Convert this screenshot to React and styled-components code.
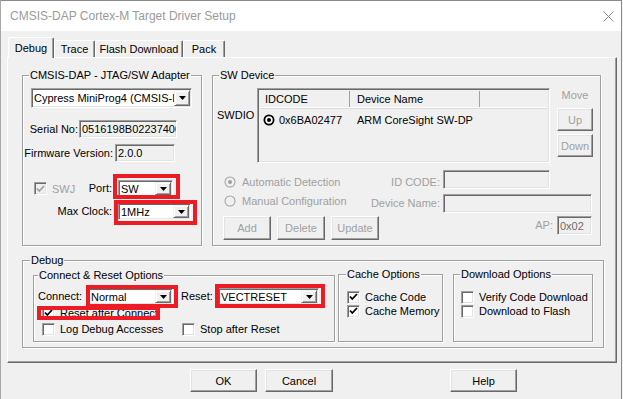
import styled, { createGlobalStyle } from "styled-components";

const GlobalStyle = createGlobalStyle`
  html, body {
    margin: 0;
    padding: 0;
    background: #f0f0f0;
  }
  body {
    font-family: "Liberation Sans", Arial, sans-serif;
    font-size: 11px;
    color: #000;
  }
`;

const Window = styled.div`
  box-sizing: border-box;
  width: 622px;
  height: 399px;
  border-top: 1px solid #8a8a8a;
  border-right: 1px solid #8a8a8a;
  border-left: 1px solid #a8a8a8;
  background: #f0f0f0;
  display: flex;
  flex-direction: column;
  overflow: hidden;
`;

const TitleBar = styled.div`
  height: 30px;
  flex: none;
  background: #fff;
  display: flex;
  align-items: center;
  justify-content: space-between;
  padding: 0 7px 0 9px;
`;

const Title = styled.span`
  font-size: 12px;
  color: #9a9a9a;
`;

const Client = styled.div`
  display: flex;
  flex-direction: column;
  padding: 6px 6px 0;
`;

const TabStrip = styled.div`
  display: flex;
  align-items: flex-end;
  height: 20px;
  padding-left: 1px;
`;

const Tab = styled.div`
  box-sizing: border-box;
  width: ${(p) => p.$w}px;
  height: ${(p) => (p.$active ? 21 : 17)}px;
  margin-bottom: ${(p) => (p.$active ? -1 : 0)}px;
  position: relative;
  z-index: ${(p) => (p.$active ? 1 : 0)};
  display: flex;
  align-items: center;
  justify-content: center;
  background: #f0f0f0;
  border: 1px solid;
  border-bottom: none;
  border-color: #fff #696969 transparent #fff;
  box-shadow: inset -1px 0 0 #a0a0a0;
  border-radius: 2px 2px 0 0;
`;

const TabPanel = styled.div`
  box-sizing: border-box;
  width: 610px;
  height: 306px;
  border: 1px solid;
  border-color: #fff #696969 #696969 #fff;
  box-shadow: inset -1px -1px 0 #a0a0a0;
  padding: 11px 0 0 14px;
  display: flex;
  flex-direction: column;
`;

const TopRow = styled.div`
  display: flex;
  gap: 10px;
`;

const Group = styled.fieldset`
  box-sizing: border-box;
  margin: ${(p) => p.$mt || 0}px 0 0 ${(p) => p.$ml || 0}px;
  padding: 0;
  min-width: 0;
  width: ${(p) => p.$w}px;
  height: ${(p) => p.$h}px;
  flex: none;
  border: 1px solid #a0a0a0;
  box-shadow: 1px 1px 0 #fff, inset 1px 1px 0 #fff;
`;

const Legend = styled.legend`
  margin-left: ${(p) => p.$lx ?? 6}px;
  padding: 0 1px;
  line-height: 13px;
  background: #f0f0f0;
`;

const GroupBody = styled.div`
  display: flex;
  flex-direction: column;
`;

const Row = styled.div`
  display: flex;
  align-items: center;
  height: ${(p) => p.$h}px;
  margin-top: ${(p) => p.$mt || 0}px;
  padding-left: ${(p) => p.$pl || 0}px;
  padding-right: ${(p) => p.$pr || 0}px;
  gap: ${(p) => p.$gap || 0}px;
`;

const Label = styled.span`
  flex: none;
  width: ${(p) => (p.$w ? `${p.$w}px` : "auto")};
  text-align: ${(p) => p.$align || "left"};
  margin-left: ${(p) => p.$ml || 0}px;
  color: ${(p) => (p.$disabled ? "#a0a0a0" : "#000")};
  align-self: ${(p) => p.$self || "auto"};
  white-space: nowrap;
  line-height: 13px;
`;

const LeftCell = styled.div`
  width: ${(p) => p.$w}px;
  flex: none;
  display: flex;
  align-items: center;
  justify-content: space-between;
`;

const Sunken = styled.div`
  box-sizing: border-box;
  position: relative;
  flex: none;
  width: ${(p) => p.$w}px;
  height: ${(p) => p.$h}px;
  border: 1px solid;
  border-color: #a0a0a0 #fff #fff #a0a0a0;
  box-shadow: inset 1px 1px 0 #696969, inset -1px -1px 0 #e3e3e3;
  align-self: ${(p) => p.$self || "auto"};
`;

const Edit = styled(Sunken)`
  background: #f0f0f0;
  display: flex;
  align-items: center;
  padding-left: 2px;
  overflow: hidden;
  white-space: nowrap;
  color: ${(p) => p.$color || "#000"};
`;

const ComboBox = styled(Sunken)`
  background: #fff;
  display: flex;
  padding: 1px;
`;

const ComboText = styled.span`
  flex: 1;
  display: flex;
  align-items: center;
  padding-left: 1px;
  overflow: hidden;
  white-space: nowrap;
`;

const ComboButton = styled.span`
  box-sizing: border-box;
  width: 16px;
  flex: none;
  display: flex;
  align-items: center;
  justify-content: center;
  background: #f0f0f0;
  border: 1px solid;
  border-color: #f0f0f0 #696969 #696969 #f0f0f0;
  box-shadow: inset 1px 1px 0 #fff, inset -1px -1px 0 #a0a0a0;
`;

const Mark = styled.span`
  position: absolute;
  pointer-events: none;
  border: 4px solid #ed1c24;
  top: ${(p) => p.$t}px;
  right: ${(p) => p.$r}px;
  bottom: ${(p) => p.$b}px;
  left: ${(p) => p.$l}px;
`;

const Button = styled.button`
  box-sizing: border-box;
  flex: none;
  width: ${(p) => p.$w}px;
  height: ${(p) => p.$h}px;
  margin-left: ${(p) => p.$ml || 0}px;
  margin-top: ${(p) => p.$mt || 0}px;
  padding: 0;
  font: inherit;
  color: ${(p) => (p.disabled ? "#a0a0a0" : "#000")};
  background: #f0f0f0;
  border: 1px solid;
  border-color: #fff #696969 #696969 #fff;
  box-shadow: inset -1px -1px 0 #a0a0a0, inset 1px 1px 0 #e3e3e3;
`;

const Check = styled.label`
  position: relative;
  display: flex;
  align-items: center;
  gap: 5px;
  height: 14px;
  width: ${(p) => (p.$w ? `${p.$w}px` : "auto")};
  flex: none;
  color: ${(p) => (p.$disabled ? "#a0a0a0" : "#000")};
  white-space: nowrap;
`;

const CheckBox = styled.span`
  box-sizing: border-box;
  width: 13px;
  height: 13px;
  flex: none;
  display: flex;
  align-items: center;
  justify-content: center;
  background: ${(p) => (p.$disabled ? "#f0f0f0" : "#fff")};
  border: 1px solid;
  border-color: #a0a0a0 #fff #fff #a0a0a0;
  box-shadow: inset 1px 1px 0 #696969, inset -1px -1px 0 #e3e3e3;
`;

const Radio = styled.span`
  display: flex;
  align-items: center;
  gap: 6px;
  width: ${(p) => p.$w}px;
  flex: none;
  height: 14px;
  color: #a0a0a0;
  white-space: nowrap;
  align-self: ${(p) => p.$self || "auto"};
`;

const ListView = styled(Sunken)`
  background: #f0f0f0;
  padding: 2px;
  display: flex;
  flex-direction: column;
`;

const ListHeader = styled.div`
  display: flex;
  height: 16px;
  flex: none;
  border-bottom: 1px solid #fff;
  box-shadow: 0 1px 0 #dcdcdc;
`;

const HeaderCell = styled.div`
  box-sizing: border-box;
  width: ${(p) => (p.$w ? `${p.$w}px` : "auto")};
  flex: ${(p) => (p.$w ? "none" : 1)};
  padding-left: ${(p) => p.$pl}px;
  display: flex;
  align-items: center;
  border-right: ${(p) => (p.$last ? "none" : "1px solid #a0a0a0")};
`;

const ListRow = styled.div`
  display: flex;
  align-items: center;
  height: 16px;
  margin-top: 4px;
`;

const Cell = styled.div`
  box-sizing: border-box;
  width: ${(p) => p.$w}px;
  padding-left: ${(p) => p.$pl}px;
  display: flex;
  align-items: center;
  gap: 4px;
  white-space: nowrap;
`;

const SideColumn = styled.div`
  display: flex;
  flex-direction: column;
  align-items: center;
  width: 36px;
  margin-left: 7px;
`;

const Spacer = styled.div`
  flex: 1;
`;

const ButtonRow = styled.div`
  display: flex;
  align-items: flex-start;
  margin-top: 6px;
  height: 23px;
`;

const DropArrow = () => (
  <svg width="7" height="4" viewBox="0 0 7 4">
    <polygon points="0,0 7,0 3.5,4" fill="#000" />
  </svg>
);

const Tick = ({ color = "#000" }) => (
  <svg width="9" height="8" viewBox="0 0 9 8">
    <polyline points="1,3.5 3.3,6 8,1" fill="none" stroke={color} strokeWidth="1.8" />
  </svg>
);

const RadioDot = ({ checked }) => (
  <svg width="12" height="12" viewBox="0 0 12 12">
    <circle cx="6" cy="6" r="5.5" fill="#a0a0a0" />
    <circle cx="6" cy="6" r="4.5" fill="#f0f0f0" />
    {checked && <circle cx="6" cy="6" r="2" fill="#a0a0a0" />}
  </svg>
);

const ListRadio = () => (
  <svg width="12" height="12" viewBox="0 0 12 12">
    <circle cx="6" cy="6" r="4.6" fill="#fff" stroke="#000" strokeWidth="1.8" />
    <circle cx="6" cy="6" r="2" fill="#000" />
  </svg>
);

const CloseIcon = () => (
  <svg width="11" height="11" viewBox="0 0 11 11">
    <path d="M0.5 0.5 L10.5 10.5 M10.5 0.5 L0.5 10.5" stroke="#8c8c8c" strokeWidth="1" />
  </svg>
);

const Combo = ({ w, h, value, children }) => (
  <ComboBox $w={w} $h={h}>
    <ComboText>{value}</ComboText>
    <ComboButton>
      <DropArrow />
    </ComboButton>
    {children}
  </ComboBox>
);

const CheckItem = ({ checked, disabled, w, children, mark }) => (
  <Check $w={w} $disabled={disabled}>
    <CheckBox $disabled={disabled}>{checked && <Tick color={disabled ? "#a0a0a0" : "#000"} />}</CheckBox>
    {children}
    {mark}
  </Check>
);

export default function App() {
  return (
    <>
      <GlobalStyle />
      <Window>
        <TitleBar>
          <Title>CMSIS-DAP Cortex-M Target Driver Setup</Title>
          <CloseIcon />
        </TitleBar>
        <Client>
          <TabStrip>
            <Tab $active $w={46}>Debug</Tab>
            <Tab $w={41}>Trace</Tab>
            <Tab $w={88}>Flash Download</Tab>
            <Tab $w={42}>Pack</Tab>
          </TabStrip>
          <TabPanel>
            <TopRow>
              <Group $w={180} $h={177}>
                <Legend>CMSIS-DAP - JTAG/SW Adapter</Legend>
                <GroupBody>
                  <Row $h={20} $mt={6} $pl={8}>
                    <Combo w={161} h={20} value="Cypress MiniProg4 (CMSIS-DAP)" />
                  </Row>
                  <Row $h={18} $mt={12} $gap={1}>
                    <Label $w={55} $align="right">Serial No:</Label>
                    <Edit $w={98} $h={18}>0516198B02237400</Edit>
                  </Row>
                  <Row $h={18} $mt={6} $gap={2}>
                    <Label $w={90} $align="right">Firmware Version:</Label>
                    <Edit $w={60} $h={18}>2.0.0</Edit>
                  </Row>
                  <Row $h={17} $mt={18} $gap={6}>
                    <LeftCell $w={89}>
                      <Check $disabled style={{ marginLeft: 11 }}>
                        <CheckBox $disabled>
                          <Tick color="#a0a0a0" />
                        </CheckBox>
                        SWJ
                      </Check>
                      <Label>Port:</Label>
                    </LeftCell>
                    <Combo w={55} h={17} value="SW">
                      <Mark $t={-7} $r={-8} $b={-3} $l={-6} />
                    </Combo>
                  </Row>
                  <Row $h={17} $mt={6} $gap={6}>
                    <LeftCell $w={89}>
                      <Spacer />
                      <Label>Max Clock:</Label>
                    </LeftCell>
                    <Combo w={73} h={17} value="1MHz">
                      <Mark $t={-4} $r={-7} $b={-6} $l={-5} />
                    </Combo>
                  </Row>
                </GroupBody>
              </Group>

              <Group $w={389} $h={177}>
                <Legend>SW Device</Legend>
                <GroupBody>
                  <Row $h={75} $mt={6} style={{ alignItems: "flex-start" }}>
                    <Label $w={44} style={{ paddingLeft: 4, paddingTop: 21, boxSizing: "border-box" }}>
                      SWDIO
                    </Label>
                    <ListView $w={293} $h={75}>
                      <ListHeader>
                        <HeaderCell $w={90} $pl={5}>IDCODE</HeaderCell>
                        <HeaderCell $w={130} $pl={7}>Device Name</HeaderCell>
                        <HeaderCell $last />
                      </ListHeader>
                      <ListRow>
                        <Cell $w={90} $pl={3}>
                          <ListRadio />
                          0x6BA02477
                        </Cell>
                        <Cell $w={130} $pl={7}>ARM CoreSight SW-DP</Cell>
                      </ListRow>
                    </ListView>
                    <SideColumn>
                      <Label $disabled style={{ lineHeight: "14px" }}>Move</Label>
                      <Button disabled $w={36} $h={23} $mt={6}>Up</Button>
                      <Button disabled $w={36} $h={23} $mt={3}>Down</Button>
                    </SideColumn>
                  </Row>
                  <Row $h={19} $mt={7} $pl={11}>
                    <Radio $w={136} $self="flex-end">
                      <RadioDot checked />
                      Automatic Detection
                    </Radio>
                    <Label $w={80} $align="right" $disabled $self="flex-end">ID CODE:</Label>
                    <Edit $w={107} $h={19} style={{ marginLeft: 3 }} />
                  </Row>
                  <Row $h={19} $mt={5} $pl={11}>
                    <Radio $w={136} $self="flex-start">
                      <RadioDot />
                      Manual Configuration
                    </Radio>
                    <Label $w={80} $align="right" $disabled>Device Name:</Label>
                    <Edit $w={149} $h={19} style={{ marginLeft: 3 }} />
                  </Row>
                  <Row $h={24} $mt={3} $pl={10} $pr={8} style={{ alignItems: "flex-start" }}>
                    <Button disabled $w={48} $h={24}>Add</Button>
                    <Button disabled $w={48} $h={24} $ml={6}>Delete</Button>
                    <Button disabled $w={48} $h={24} $ml={6}>Update</Button>
                    <Spacer />
                    <Label $disabled style={{ marginTop: 3, marginRight: 4 }}>AP:</Label>
                    <Edit $w={35} $h={19} $color="#6d6d6d">0x02</Edit>
                  </Row>
                </GroupBody>
              </Group>
            </TopRow>

            <Group $w={582} $h={94} $mt={8}>
              <Legend $lx={7}>Debug</Legend>
              <Row $h={74} $pl={10} style={{ alignItems: "flex-start" }}>
                <Group $w={302} $h={73} $mt={2}>
                  <Legend $lx={4}>Connect &amp; Reset Options</Legend>
                  <GroupBody>
                    <Row $h={17} $mt={6} $pl={4}>
                      <Label $w={50}>Connect:</Label>
                      <Combo w={85} h={17} value="Normal">
                        <Mark $t={-4} $r={-6} $b={-4} $l={-3} />
                      </Combo>
                      <Label $w={37} $ml={8}>Reset:</Label>
                      <Combo w={101} h={17} value="VECTRESET">
                        <Mark $t={-5} $r={-7} $b={-4} $l={-4} />
                      </Combo>
                    </Row>
                    <Row $h={14} $mt={1} $pl={8}>
                      <CheckItem checked mark={<Mark $t={0} $r={-2} $b={0} $l={-5} />}>
                        Reset after Connect
                      </CheckItem>
                    </Row>
                    <Row $h={14} $mt={2} $pl={8}>
                      <CheckItem w={140}>Log Debug Accesses</CheckItem>
                      <CheckItem>Stop after Reset</CheckItem>
                    </Row>
                  </GroupBody>
                </Group>

                <Group $w={105} $h={74} $mt={1} $ml={3}>
                  <Legend $lx={7}>Cache Options</Legend>
                  <GroupBody>
                    <Row $h={14} $mt={9} $pl={8}>
                      <CheckItem checked>Cache Code</CheckItem>
                    </Row>
                    <Row $h={14} $pl={8}>
                      <CheckItem checked>Cache Memory</CheckItem>
                    </Row>
                  </GroupBody>
                </Group>

                <Group $w={140} $h={74} $mt={1} $ml={10}>
                  <Legend $lx={6}>Download Options</Legend>
                  <GroupBody>
                    <Row $h={14} $mt={9} $pl={7}>
                      <CheckItem>Verify Code Download</CheckItem>
                    </Row>
                    <Row $h={14} $pl={7}>
                      <CheckItem>Download to Flash</CheckItem>
                    </Row>
                  </GroupBody>
                </Group>
              </Row>
            </Group>
          </TabPanel>

          <ButtonRow>
            <Button $w={67} $h={23} $ml={183}>OK</Button>
            <Button $w={68} $h={23} $ml={8}>Cancel</Button>
            <Button $w={67} $h={23} $ml={117}>Help</Button>
          </ButtonRow>
        </Client>
      </Window>
    </>
  );
}
